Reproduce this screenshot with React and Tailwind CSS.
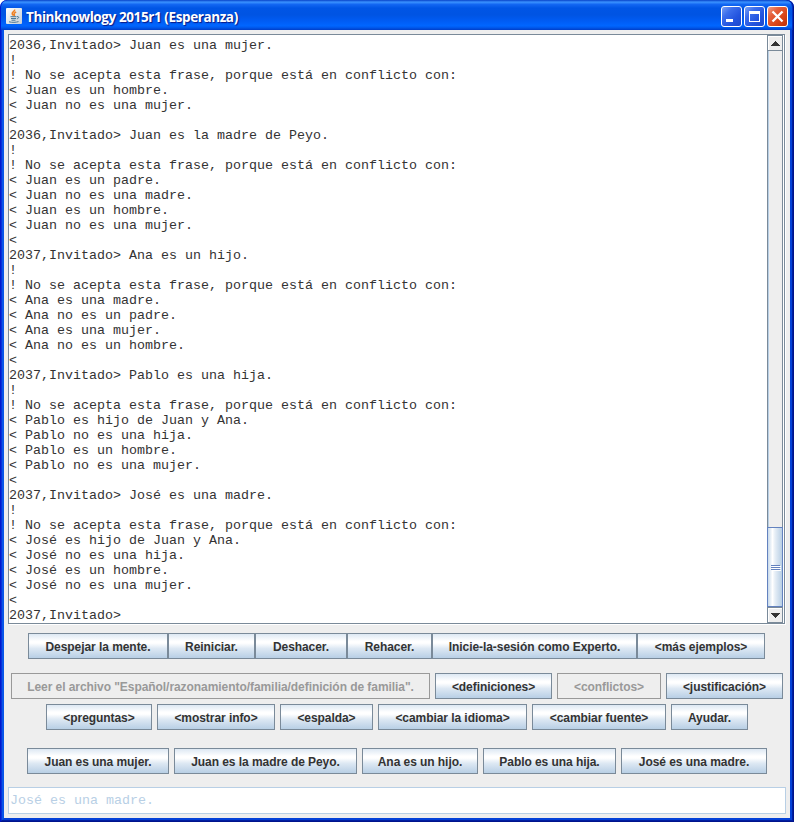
const lines = [
  '2036,Invitado> Juan es una mujer.',
  '!',
  '! No se acepta esta frase, porque está en conflicto con:',
  '< Juan es un hombre.',
  '< Juan no es una mujer.',
  '<',
  '2036,Invitado> Juan es la madre de Peyo.',
  '!',
  '! No se acepta esta frase, porque está en conflicto con:',
  '< Juan es un padre.',
  '< Juan no es una madre.',
  '< Juan es un hombre.',
  '< Juan no es una mujer.',
  '<',
  '2037,Invitado> Ana es un hijo.',
  '!',
  '! No se acepta esta frase, porque está en conflicto con:',
  '< Ana es una madre.',
  '< Ana no es un padre.',
  '< Ana es una mujer.',
  '< Ana no es un hombre.',
  '<',
  '2037,Invitado> Pablo es una hija.',
  '!',
  '! No se acepta esta frase, porque está en conflicto con:',
  '< Pablo es hijo de Juan y Ana.',
  '< Pablo no es una hija.',
  '< Pablo es un hombre.',
  '< Pablo no es una mujer.',
  '<',
  '2037,Invitado> José es una madre.',
  '!',
  '! No se acepta esta frase, porque está en conflicto con:',
  '< José es hijo de Juan y Ana.',
  '< José no es una hija.',
  '< José es un hombre.',
  '< José no es una mujer.',
  '<',
  '2037,Invitado>',
];

function Btn({ w, disabled, children }) {
  const look = disabled
    ? 'border-[#999999] bg-[#eeeeee] text-[#999999]'
    : 'border-[#7a8a99] bg-[linear-gradient(180deg,#dde8f3_0%,#ffffff_30%,#ffffff_38%,#dde8f3_60%,#b8cfe5_100%)] text-[#333333]';
  return (
    <button
      disabled={disabled}
      className={`flex h-[26px] shrink-0 items-center justify-center whitespace-nowrap border pt-px font-['Liberation_Sans',Arial,sans-serif] text-[12px] leading-none font-bold tracking-[-0.06px] ${look} ${w}`}
    >
      {children}
    </button>
  );
}

function JavaIcon() {
  return (
    <svg width="16" height="16" viewBox="0 0 16 16" className="-mt-px shrink-0">
      <defs>
        <linearGradient id="java" x1="0" y1="0" x2="1" y2="1">
          <stop offset="0" stopColor="#ffffff" />
          <stop offset="1" stopColor="#c4ced6" />
        </linearGradient>
      </defs>
      <rect x="0" y="0" width="16" height="16" rx="1" fill="url(#java)" />
      <path d="M8.600 1.500c.8 1.600-3 2.600-2.400 4.300.2.800 1 1.200 1.300 2M10.200 4c-1.700.7-2.700 1.500-1.900 2.500.4.500.3 1-.2 1.500" fill="none" stroke="#ee8024" strokeWidth="1.500" />
      <path d="M4.500 8.700h6M5 10.500h5M5.500 12.200h4M3 13.800c3 .8 7 .7 9.500-.2M11 8.600c2.200-.5 2.400 1.700-.2 2.300" fill="none" stroke="#4b7795" strokeWidth="1" />
    </svg>
  );
}

const capBase = 'flex size-[21px] shrink-0 items-center justify-center rounded-[3px] border border-white';
const capBlue = 'bg-[linear-gradient(135deg,#7aa0f4_0%,#3c6eec_30%,#2354df_65%,#1c48cc_100%)]';

function TitleBar() {
  return (
    <header className="flex h-[30px] shrink-0 items-center rounded-t-[7px] bg-[linear-gradient(180deg,#0842c8_0%,#3a92ff_7%,#1266f2_15%,#0055e5_27%,#0054e3_50%,#005cf4_70%,#0066ff_86%,#0058ec_92%,#003ec8_100%)] pt-[3px] pr-[6px] pl-[6px] shadow-[inset_1px_0_0_#0019cf,inset_-1px_0_0_#00138c,inset_-2px_0_0_#0030c0]">
      <JavaIcon />
      <h1 className="ml-[4px] flex-1 whitespace-nowrap font-['Open_Sans','Noto_Sans',sans-serif] text-[13.5px] leading-[20px] font-bold tracking-[-0.4px] text-white [text-shadow:1px_1px_1px_#0a1883]">
        Thinknowlogy 2015r1 (Esperanza)
      </h1>
      <div className="flex gap-[2px]">
        <button className={`${capBase} ${capBlue}`}>
          <svg width="19" height="19"><rect x="4" y="12" width="7" height="3" fill="#fff" /></svg>
        </button>
        <button className={`${capBase} ${capBlue}`}>
          <svg width="19" height="19"><path d="M4 4h11v11H4zM5 7v7h9V7z" fill="#fff" fillRule="evenodd" /></svg>
        </button>
        <button className={`${capBase} bg-[linear-gradient(135deg,#f0a088_0%,#e5603c_30%,#da4519_65%,#bd3009_100%)]`}>
          <svg width="19" height="19"><path d="M4.500 4.500l10 10M14.500 4.500l-10 10" stroke="#fff" strokeWidth="2.300" /></svg>
        </button>
      </div>
    </header>
  );
}

function Arrow({ down }) {
  return (
    <div className="flex h-[16px] shrink-0 items-center justify-center border border-[#7a8a99] bg-[#eeeeee] shadow-[inset_1px_1px_0_#fff]">
      <svg width="9" height="5" shapeRendering="crispEdges">
        <path d={down ? 'M0 0h9v1h-1v1h-1v1h-1v1h-1v1h-1v-1h-1v-1h-1v-1h-1v-1h-1z' : 'M4 0h1v1h1v1h1v1h1v1h1v1h-9v-1h1v-1h1v-1h1v-1h1z'} fill="#333" />
      </svg>
    </div>
  );
}

function ScrollBar() {
  return (
    <div className="flex w-[16px] shrink-0 flex-col">
      <Arrow />
      <div className="flex flex-1 flex-col justify-end border-x border-[#7a8a99] bg-[#eeeeee] shadow-[inset_1px_0_0_#b8cfe5]">
        <div className="-mx-px flex h-[80px] flex-col items-center justify-center gap-px border border-[#6382bf] bg-[linear-gradient(90deg,#c8daeb_0%,#ffffff_32%,#e6eef6_50%,#b8cfe5_100%)]">
          <i className="h-px w-[9px] bg-[#6382bf] shadow-[1px_1px_0_#fff]" />
          <i className="h-px w-[9px] bg-[#6382bf] shadow-[1px_1px_0_#fff]" />
          <i className="h-px w-[9px] bg-[#6382bf] shadow-[1px_1px_0_#fff]" />
        </div>
      </div>
      <Arrow down />
    </div>
  );
}

export default function App() {
  return (
    <div className="flex h-[822px] w-[794px] flex-col overflow-hidden rounded-t-[7px] bg-[#0831d9]">
      <TitleBar />
      <div className="flex min-h-0 flex-1 border-x border-b border-r-[#00138c] border-b-[#00138c] border-l-[#0019cf]">
        <div className="flex min-h-0 flex-1 border-x border-b border-r-[#001ea0] border-b-[#001ea0] border-l-[#0831d9]">
          <div className="flex min-h-0 flex-1 flex-col border-x-2 border-b-2 border-r-[#0441d8] border-b-[#0441d8] border-l-[#0855e8] bg-[#eeeeee] px-[4px] pt-[4px]">
            <main className="flex h-[590px] w-[777px] shrink-0 border border-[#7a8a99] bg-white pr-px shadow-[1px_1px_0_#fff]">
              <pre className="flex-1 pt-[3px] font-['Liberation_Mono','Courier_New',monospace] text-[13.333px] leading-[15px] text-[#333333]">
                {lines.join('\n')}
              </pre>
              <ScrollBar />
            </main>
            <div className="mt-[9px] flex pl-[20px]">
              <Btn w="w-[140px]">Despejar la mente.</Btn>
              <Btn w="w-[87px]">Reiniciar.</Btn>
              <Btn w="w-[92px]">Deshacer.</Btn>
              <Btn w="w-[85px]">Rehacer.</Btn>
              <Btn w="w-[205px]">Inicie-la-sesión como Experto.</Btn>
              <Btn w="w-[128px]">&lt;más ejemplos&gt;</Btn>
            </div>
            <div className="mt-[14px] flex gap-[5px] pl-[3px]">
              <Btn w="w-[419px]" disabled>Leer el archivo "Español/razonamiento/familia/definición de familia".</Btn>
              <Btn w="w-[117px]">&lt;definiciones&gt;</Btn>
              <Btn w="w-[104px]" disabled>&lt;conflictos&gt;</Btn>
              <Btn w="w-[117px]">&lt;justificación&gt;</Btn>
            </div>
            <div className="mt-[5px] flex gap-[5px] pl-[38px]">
              <Btn w="w-[106px]">&lt;preguntas&gt;</Btn>
              <Btn w="w-[118px]">&lt;mostrar info&gt;</Btn>
              <Btn w="w-[93px]">&lt;espalda&gt;</Btn>
              <Btn w="w-[149px]">&lt;cambiar la idioma&gt;</Btn>
              <Btn w="w-[134px]">&lt;cambiar fuente&gt;</Btn>
              <Btn w="w-[77px]">Ayudar.</Btn>
            </div>
            <div className="mt-[18px] flex gap-[5px] pl-[19px]">
              <Btn w="w-[142px]">Juan es una mujer.</Btn>
              <Btn w="w-[183px]">Juan es la madre de Peyo.</Btn>
              <Btn w="w-[116px]">Ana es un hijo.</Btn>
              <Btn w="w-[133px]">Pablo es una hija.</Btn>
              <Btn w="w-[146px]">José es una madre.</Btn>
            </div>
            <div className="mt-[13px] flex h-[27px] w-[778px] shrink-0 items-center border border-[#b8cfe5] bg-white pl-px font-['Liberation_Mono','Courier_New',monospace] text-[13.333px] leading-[15px] text-[#b8cfe5]">
              José es una madre.
            </div>
          </div>
        </div>
      </div>
    </div>
  );
}
